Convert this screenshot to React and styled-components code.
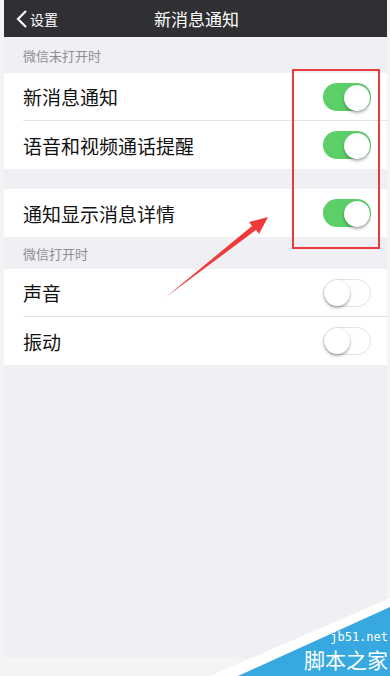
import React from "react";
import styled, { createGlobalStyle } from "styled-components";

const Global = createGlobalStyle`
  html, body {
    margin: 0;
    padding: 0;
    background: #f4f4f4;
    font-family: "Noto Sans CJK SC", "Noto Sans", sans-serif;
  }
`;

const Page = styled.div`
  position: relative;
  width: 390px;
  height: 676px;
  overflow: hidden;
  background: #f4f4f4;
`;

const Phone = styled.div`
  margin-left: 4px;
  width: 383px;
  height: 658px;
  background: #efeff4;
  display: flex;
  flex-direction: column;
`;

const NavBar = styled.div`
  position: relative;
  height: 37px;
  background: #2f2f34;
  display: flex;
  align-items: center;
  justify-content: center;
  color: #fff;
`;

const Back = styled.div`
  position: absolute;
  left: 12px;
  top: 0;
  height: 37px;
  display: flex;
  align-items: center;
  gap: 2px;
  font-size: 14px;
`;

const Title = styled.div`
  font-size: 17px;
  margin-left: 2px;
`;

const SectionHeader = styled.div`
  height: ${(p) => p.$h}px;
  padding: 0 19px;
  display: flex;
  align-items: center;
  font-size: 13px;
  color: #8e8e93;
`;

const Gap = styled.div`
  height: ${(p) => p.$h}px;
`;

const Group = styled.div`
  background: #fff;
`;

const Row = styled.div`
  height: 48px;
  margin-left: 19px;
  padding-right: 16px;
  display: flex;
  align-items: center;
  justify-content: space-between;
  font-size: 19px;
  color: #111;
  border-bottom: ${(p) => (p.$last ? "none" : "1px solid #e3e3e6")};
  box-sizing: border-box;
`;

const Switch = styled.div`
  position: relative;
  width: 48px;
  height: 28px;
  border-radius: 14px;
  box-sizing: border-box;
  background: ${(p) => (p.$on ? "#5ccf69" : "#fff")};
  border: ${(p) => (p.$on ? "none" : "1px solid #e2e2e2")};

  &::after {
    content: "";
    position: absolute;
    top: ${(p) => (p.$on ? "2px" : "0")};
    left: ${(p) => (p.$on ? "21px" : "0")};
    width: 26px;
    height: 26px;
    border-radius: 50%;
    background: #fff;
    box-shadow: 0 2px 3px rgba(0, 0, 0, 0.3), 0 0 0 0.5px rgba(0, 0, 0, 0.08);
  }
`;

const Highlight = styled.div`
  position: absolute;
  left: 292px;
  top: 69px;
  width: 88px;
  height: 180px;
  border: 2.5px solid #e63a3f;
  box-sizing: border-box;
`;

const Overlay = styled.svg`
  position: absolute;
  left: 0;
  top: 0;
  pointer-events: none;
`;

const Watermark = styled.div`
  position: absolute;
  right: 2px;
  bottom: 2px;
  text-align: right;
  color: #fff;
`;

const Domain = styled.div`
  font-family: "DejaVu Sans Mono", monospace;
  font-size: 12px;
  line-height: 14px;
`;

const Brand = styled.div`
  font-size: 21px;
  line-height: 30px;
`;

const rows1 = [
  { label: "新消息通知", on: true },
  { label: "语音和视频通话提醒", on: true },
];
const rows2 = [
  { label: "声音", on: false },
  { label: "振动", on: false },
];

const SettingsGroup = ({ rows }) => (
  <Group>
    {rows.map((r, i) => (
      <Row key={r.label} $last={i === rows.length - 1}>
        {r.label}
        <Switch $on={r.on} />
      </Row>
    ))}
  </Group>
);

export default function App() {
  return (
    <Page>
      <Global />
      <Phone>
        <NavBar>
          <Back>
            <svg width="12" height="20" viewBox="0 0 12 20">
              <path d="M10 2 L2 10 L10 18" fill="none" stroke="#fff" strokeWidth="2.2" />
            </svg>
            设置
          </Back>
          <Title>新消息通知</Title>
        </NavBar>
        <SectionHeader $h={36}>微信未打开时</SectionHeader>
        <SettingsGroup rows={rows1} />
        <Gap $h={20} />
        <SettingsGroup rows={[{ label: "通知显示消息详情", on: true }]} />
        <SectionHeader $h={32}>微信打开时</SectionHeader>
        <SettingsGroup rows={rows2} />
      </Phone>
      <Highlight />
      <Overlay width="390" height="676" viewBox="0 0 390 676">
        <path d="M166 297 L252 226 L249 222 L268 217 L259 234 L256 230 Z" fill="#ef3a3a" />
        <polygon points="210,676 390,598 390,676" fill="#ffffff" />
        <polygon points="238,676 390,607 390,676" fill="#38a9e0" />
      </Overlay>
      <Watermark>
        <Domain>jb51.net</Domain>
        <Brand>脚本之家</Brand>
      </Watermark>
    </Page>
  );
}
